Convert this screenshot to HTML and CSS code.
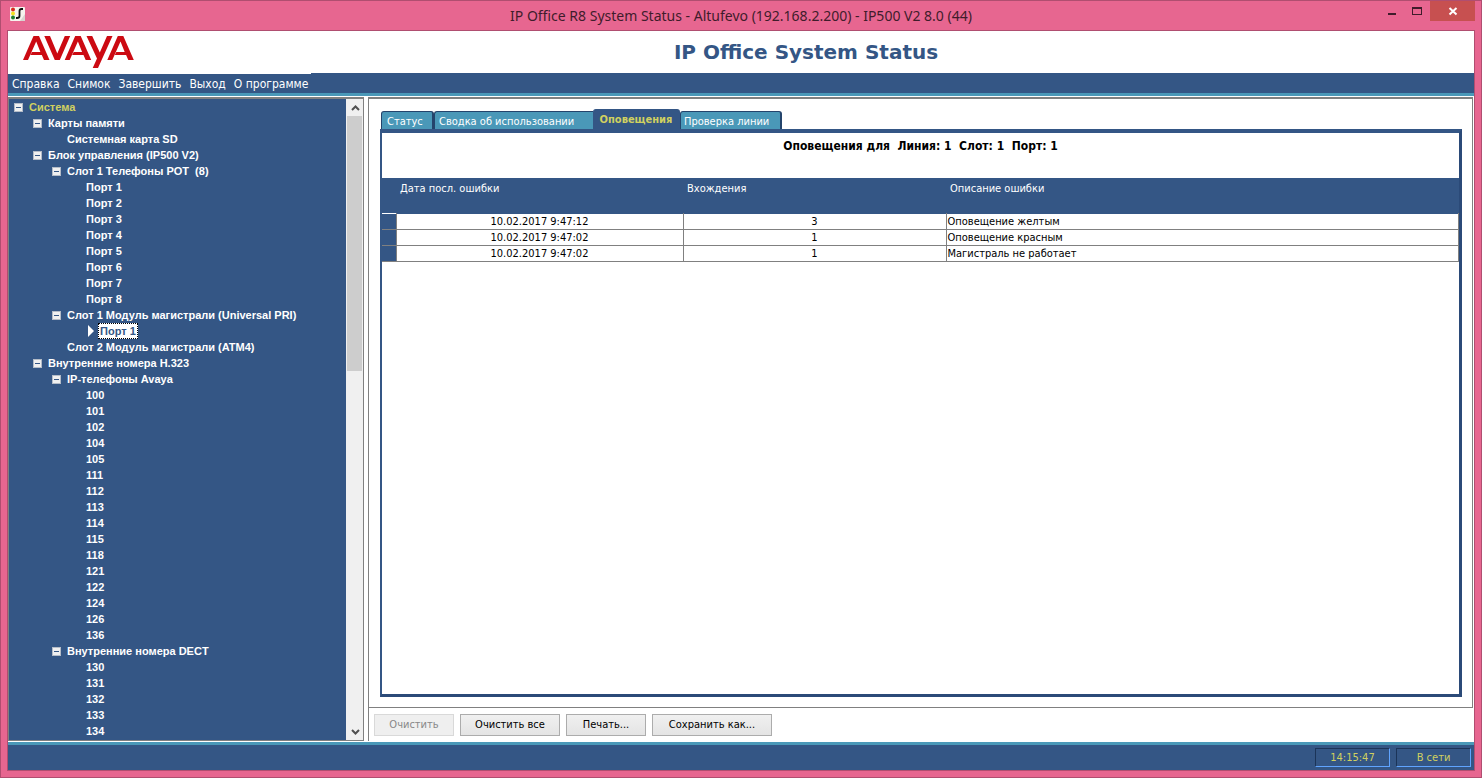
FILE: index.html
```html
<!DOCTYPE html>
<html lang="ru">
<head>
<meta charset="utf-8">
<title>IP Office R8 System Status</title>
<link rel="stylesheet" href="styles.css">
</head>
<body>
<div class="window">
  <header class="titlebar">
    <svg class="app-icon" viewBox="0 0 16 16" aria-hidden="true">
      <rect x="0" y="0" width="15" height="14" rx="1" fill="#f6f3ee"/>
      <path d="M10 14L15 7V14Z" fill="#d8d4d0"/>
      <circle cx="3" cy="2.500" r="2" fill="#d8281e"/>
      <circle cx="3" cy="6.500" r="2" fill="#f4e020"/>
      <circle cx="3" cy="10.500" r="2" fill="#1d7d2c"/>
      <path d="M13 2H11.500Q9.500 2 9.500 4V9Q9.500 11 7 11H6" fill="none" stroke="#111" stroke-width="1.800"/>
    </svg>
    <span class="title">IP Office R8 System Status - Altufevo (192.168.2.200) - IP500 V2 8.0 (44)</span>
    <div class="controls">
      <button type="button" class="control" aria-label="Свернуть"><svg viewBox="0 0 10 10"><path d="M1 7H9V9H1Z" fill="#3f1c2b"/></svg></button>
      <button type="button" class="control" aria-label="Развернуть"><svg viewBox="0 0 10 10"><path d="M0 1H10V9H0ZM1 3V8H9V3Z" fill="#3f1c2b" fill-rule="evenodd"/></svg></button>
      <button type="button" class="control close" aria-label="Закрыть"><svg viewBox="0 0 10 10"><path d="M1.500 2L8.500 8.500M8.500 2L1.500 8.500" stroke="#fff" stroke-width="2"/></svg></button>
    </div>
  </header>
  <div class="client">
    <div class="banner">
      <svg class="logo" viewBox="0 0 112 34" role="img" aria-label="Avaya">
        <g fill="#cc0a12">
          <path id="peak" d="M0 24L10.500 0H16L26.500 24H21L18.800 19H7.500L9 16H17.400L13.200 5.500L5 24Z"/>
          <path d="M21.300 0H27L34.300 17.500L41.800 0H47.200L36.800 24H31.800Z"/>
          <use href="#peak" x="41.700"/>
          <path d="M63.500 0H69.200L76.800 16.500L84 0H89.500L75 32H69.700L74 22.500Z"/>
          <use href="#peak" x="84.300"/>
        </g>
      </svg>
      <h1 class="product">IP Office System Status</h1>
    </div>
    <nav class="menubar">
      <div class="menu">
        <button type="button">Справка</button>
        <button type="button">Снимок</button>
        <button type="button">Завершить</button>
        <button type="button">Выход</button>
        <button type="button">О программе</button>
      </div>
    </nav>
    <div class="workspace">
      <aside class="sidebar">
        <ul class="tree">
          <li><div class="row root"><button type="button" class="toggle" aria-label="Свернуть узел"></button><span>Система</span></div>
            <ul>
              <li><div class="row"><button type="button" class="toggle" aria-label="Свернуть узел"></button><span>Карты памяти</span></div>
                <ul><li><div class="row leaf">Системная карта SD</div></li></ul>
              </li>
              <li><div class="row"><button type="button" class="toggle" aria-label="Свернуть узел"></button><span>Блок управления (IP500 V2)</span></div>
                <ul>
                  <li><div class="row"><button type="button" class="toggle" aria-label="Свернуть узел"></button><span>Слот 1 Телефоны POT&nbsp; (8)</span></div>
                    <ul>
                      <li><div class="row leaf">Порт 1</div></li>
                      <li><div class="row leaf">Порт 2</div></li>
                      <li><div class="row leaf">Порт 3</div></li>
                      <li><div class="row leaf">Порт 4</div></li>
                      <li><div class="row leaf">Порт 5</div></li>
                      <li><div class="row leaf">Порт 6</div></li>
                      <li><div class="row leaf">Порт 7</div></li>
                      <li><div class="row leaf">Порт 8</div></li>
                    </ul>
                  </li>
                  <li><div class="row"><button type="button" class="toggle" aria-label="Свернуть узел"></button><span>Слот 1 Модуль магистрали (Universal PRI)</span></div>
                    <ul><li><div class="row current"><svg class="pointer" viewBox="0 0 6 12" aria-hidden="true"><path d="M0 0L6 6L0 12Z" fill="#fff"/></svg><span class="selected">Порт 1</span></div></li></ul>
                  </li>
                  <li><div class="row leaf">Слот 2 Модуль магистрали (ATM4)</div></li>
                </ul>
              </li>
              <li><div class="row"><button type="button" class="toggle" aria-label="Свернуть узел"></button><span>Внутренние номера H.323</span></div>
                <ul>
                  <li><div class="row"><button type="button" class="toggle" aria-label="Свернуть узел"></button><span>IP-телефоны Avaya</span></div>
                    <ul>
                      <li><div class="row leaf">100</div></li>
                      <li><div class="row leaf">101</div></li>
                      <li><div class="row leaf">102</div></li>
                      <li><div class="row leaf">104</div></li>
                      <li><div class="row leaf">105</div></li>
                      <li><div class="row leaf">111</div></li>
                      <li><div class="row leaf">112</div></li>
                      <li><div class="row leaf">113</div></li>
                      <li><div class="row leaf">114</div></li>
                      <li><div class="row leaf">115</div></li>
                      <li><div class="row leaf">118</div></li>
                      <li><div class="row leaf">121</div></li>
                      <li><div class="row leaf">122</div></li>
                      <li><div class="row leaf">124</div></li>
                      <li><div class="row leaf">126</div></li>
                      <li><div class="row leaf">136</div></li>
                    </ul>
                  </li>
                  <li><div class="row"><button type="button" class="toggle" aria-label="Свернуть узел"></button><span>Внутренние номера DECT</span></div>
                    <ul>
                      <li><div class="row leaf">130</div></li>
                      <li><div class="row leaf">131</div></li>
                      <li><div class="row leaf">132</div></li>
                      <li><div class="row leaf">133</div></li>
                      <li><div class="row leaf">134</div></li>
                    </ul>
                  </li>
                </ul>
              </li>
            </ul>
          </li>
        </ul>
        <div class="scrollbar">
          <button type="button" aria-label="Вверх"><svg viewBox="0 0 9 6"><path d="M1 5L4.500 1.500L8 5" fill="none" stroke="#505050" stroke-width="2"/></svg></button>
          <div class="track"><div class="thumb"></div></div>
          <button type="button" aria-label="Вниз"><svg viewBox="0 0 9 6"><path d="M1 1L4.500 4.500L8 1" fill="none" stroke="#505050" stroke-width="2"/></svg></button>
        </div>
      </aside>
      <main class="content">
        <section class="pane">
          <div class="tabs" role="tablist">
            <button type="button" class="tab status" role="tab">Статус</button>
            <button type="button" class="tab usage" role="tab">Сводка об использовании</button>
            <button type="button" class="tab active" role="tab" aria-selected="true">Оповещения</button>
            <button type="button" class="tab check" role="tab">Проверка линии</button>
          </div>
          <div class="panel" role="tabpanel">
            <h2 class="heading">Оповещения для&nbsp; Линия: 1&nbsp; Слот: 1&nbsp; Порт: 1</h2>
            <table class="alarms">
              <colgroup><col class="col-mark"><col class="col-date"><col class="col-count"><col></colgroup>
              <thead>
                <tr><th></th><th>Дата посл. ошибки</th><th>Вхождения</th><th>Описание ошибки</th></tr>
              </thead>
              <tbody>
                <tr><td class="mark"></td><td class="center">10.02.2017 9:47:12</td><td class="center">3</td><td>Оповещение желтым</td></tr>
                <tr><td class="mark"></td><td class="center">10.02.2017 9:47:02</td><td class="center">1</td><td>Оповещение красным</td></tr>
                <tr><td class="mark"></td><td class="center">10.02.2017 9:47:02</td><td class="center">1</td><td>Магистраль не работает</td></tr>
              </tbody>
            </table>
          </div>
        </section>
        <div class="actions">
          <button type="button" class="action" disabled>Очистить</button>
          <button type="button" class="action wide">Очистить все</button>
          <button type="button" class="action">Печать...</button>
          <button type="button" class="action widest">Сохранить как...</button>
        </div>
      </main>
    </div>
    <footer class="statusbar">
      <span class="cell">14:15:47</span>
      <span class="cell">В сети</span>
    </footer>
  </div>
</div>
</body>
</html>
```
FILE: styles.css
```css
:root {
  --blue: #345685;
  --teal: #4a98b8;
  --pink: #e76690;
  --edge: #b04e70;
  --ui: "DejaVu Sans Condensed", "DejaVu Sans", sans-serif;
}
* { box-sizing: border-box; }
body { margin: 0; font: 11px/16px var(--ui); color: #000; }
button { margin: 0; padding: 0; border: 0; background: none; font: inherit; color: inherit; }
ul { margin: 0; padding: 0; list-style: none; }

.window {
  display: flex;
  flex-direction: column;
  min-height: 100vh;
  padding: 0 6px 6px;
  border: 1px solid var(--edge);
  background: var(--pink);
}
.titlebar {
  display: grid;
  grid-template-columns: 96px 1fr 96px;
  height: 29px;
}
.app-icon { width: 16px; height: 16px; margin: 6px 0 0 3px; }
.title { text-align: center; font: 14px/29px "Noto Sans", sans-serif; color: #3f1c2b; }
.controls { display: flex; justify-content: flex-end; }
.control { display: flex; align-items: center; justify-content: center; width: 27px; height: 20px; }
.control svg { width: 10px; height: 10px; }
.close { width: 45px; flex: none; background: #c75050; }

.client {
  flex: 1;
  display: flex;
  flex-direction: column;
  border: 1px solid var(--edge);
  background: #fff;
}
.banner { display: grid; grid-template-columns: 130px 1fr; height: 42px; }
.logo { width: 112px; height: 34px; margin: 5px 0 0 15px; }
.product { margin: 0; text-align: center; font: bold 20px/43px "DejaVu Sans", sans-serif; color: var(--blue); }

.menubar { display: flex; height: 23px; background: var(--blue); border-bottom: 3px solid var(--teal); }
.menu {
  display: flex;
  gap: 8px;
  padding: 1px 3px 0 4px;
  border-top: 1px solid #fff;
  font: 12px/19px var(--ui);
  color: #fff;
}

.workspace { flex: 1; display: flex; gap: 4px; padding: 1px 1px 1px 0; }
.sidebar {
  display: flex;
  width: 356px;
  border: 1px solid #808080;
  border-top-width: 2px;
  background: var(--blue);
}
.tree { flex: 1; font: bold 11px/16px "Liberation Sans", sans-serif; color: #fff; white-space: nowrap; }
.tree ul { padding-left: 19px; }
.row { display: flex; align-items: center; gap: 6px; height: 16px; padding-left: 5px; }
.root { color: #d0d060; }
.leaf { padding-left: 20px; }
.current { gap: 4px; padding-left: 22px; }
.pointer { width: 6px; height: 12px; }
.selected { line-height: 14px; padding: 0 1px; border: 1px dotted #000; background: #fff; color: var(--blue); }
.toggle {
  width: 9px;
  height: 9px;
  border: 1px solid #b4bcc8;
  background: linear-gradient(#345685, #345685) center / 5px 1px no-repeat, #f0f0f0;
}
.scrollbar { display: flex; flex-direction: column; width: 17px; padding-left: 1px; background: #f0f0f0; }
.scrollbar button { display: flex; align-items: center; justify-content: center; height: 17px; }
.scrollbar svg { width: 9px; height: 6px; }
.track { flex: 1; }
.thumb { width: 15px; height: 42%; background: #cdcdcd; }

.content { flex: 1; display: flex; flex-direction: column; border-left: 1px solid #808080; }
.pane {
  flex: 1;
  display: flex;
  flex-direction: column;
  padding: 10px 10px 10px 11px;
  border: 1px solid #808080;
  border-top-width: 2px;
  border-left: 0;
}
.tabs { display: flex; align-items: flex-end; height: 20px; padding-left: 1px; }
.tab {
  height: 18px;
  border: 1px solid #24446c;
  border-width: 1px 2px 0 1px;
  border-radius: 3px 3px 0 0;
  padding: 2px 4px 0 5px;
  background: var(--teal);
  color: #fff;
  text-align: left;
  white-space: nowrap;
}
.status { width: 53px; }
.usage { width: 159px; border-right: 0; border-top-right-radius: 0; padding-left: 4px; }
.active { width: 87px; height: 20px; padding: 0; border-color: var(--blue); background: var(--blue); color: #d0d060; font-weight: bold; text-align: center; }
.check { width: 102px; padding-left: 3px; }
.panel { flex: 1; border: 2px solid var(--blue); border-width: 4px 3px 3px 2px; border-right-color: #2b4a78; border-bottom-color: #2b4a78; }
.heading { height: 45px; margin: 0; padding-top: 5px; text-align: center; font: bold 12px/16px var(--ui); }

.alarms { width: 100%; table-layout: fixed; border-collapse: collapse; }
.col-mark { width: 14px; }
.col-date { width: 287px; }
.col-count { width: 263px; }
.alarms th { height: 35px; padding: 3px 4px; background: var(--blue); color: #fff; font-weight: normal; text-align: left; vertical-align: top; }
.alarms td { height: 16px; padding: 0 1px; border: 1px solid #808080; line-height: 15px; }
.alarms thead + tbody tr:first-child td { border-top-color: var(--blue); }
.alarms .mark { border-left: 0; background: var(--blue); }
.alarms thead + tbody tr:first-child .mark { border-top-color: #fff; }
.alarms .center { text-align: center; }

.actions { display: flex; gap: 6px; padding: 6px 5px 5px; }
.action {
  width: 80px;
  height: 22px;
  border: 1px solid #acacac;
  background: linear-gradient(#f0f0f0, #e4e4e4);
}
.action:disabled { border-color: #d9d9d9; background: #efefef; color: #888; }
.wide { width: 100px; }
.widest { width: 120px; }

.statusbar {
  display: flex;
  justify-content: flex-end;
  gap: 6px;
  height: 28px;
  padding: 3px 3px;
  border-top: 3px solid var(--teal);
  background: var(--blue);
}
.cell {
  width: 75px;
  height: 19px;
  border: 1px solid;
  border-color: #1b3458 #60a4ff #60a4ff #1b3458;
  line-height: 17px;
  text-align: center;
  color: #d0d060;
}
```
